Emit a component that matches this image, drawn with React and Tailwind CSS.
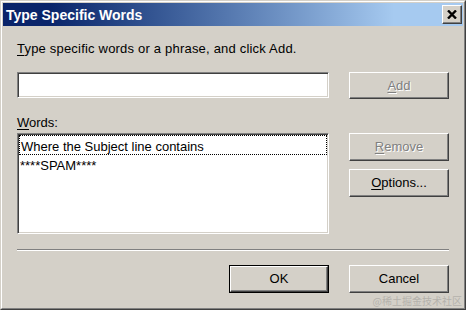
import React from "react";

// classic 3D edges
const raised =
  "border border-t-white border-l-white border-r-[#404040] border-b-[#404040] shadow-[inset_-1px_-1px_0_#808080,inset_1px_1px_0_#d4d0c8]";
const sunken =
  "border border-t-[#808080] border-l-[#808080] border-r-white border-b-white shadow-[inset_1px_1px_0_#404040,inset_-1px_-1px_0_#d4d0c8]";

const Mn = ({ children }) => <span className="underline underline-offset-[2px]">{children}</span>;

const Btn = ({ children, disabled, className = "" }) => (
  <button
    className={`${raised} ${className} flex items-center justify-center bg-[#d4d0c8] ${
      disabled ? "text-[#808080] [text-shadow:1px_1px_0_#ffffff]" : "text-black"
    }`}
  >
    {children}
  </button>
);

const TypeSpecificWords = () => {
  return (
    <div className="relative w-[466px] h-[310px] overflow-hidden bg-[#d4d0c8] font-['Liberation_Sans',Arial,sans-serif] text-[13px] leading-[16px] text-black border border-t-[#d4d0c8] border-l-[#d4d0c8] border-r-[#404040] border-b-[#404040]">
      <div className="h-full border border-t-white border-l-white border-r-[#808080] border-b-[#808080] p-[1px] flex flex-col">
        {/* Title bar */}
        <div className="h-[23px] flex items-center justify-between pl-[3px] pr-[1px] bg-linear-to-r from-[#0a246a] from-10% to-[#a6caf0] to-85%">
          <span className="text-white font-bold text-[14px] leading-[16px]">Type Specific Words</span>
          <div className={`${raised} w-[20px] h-[19px] bg-[#d4d0c8] flex items-center justify-center`}>
            <svg width="10" height="9" viewBox="0 0 10 9">
              <path d="M1 0.5L9 8.5M9 0.5L1 8.5" stroke="#000" strokeWidth="2.4" />
            </svg>
          </div>
        </div>

        {/* Body */}
        <div className="flex-1 pl-[14px] pr-[14px] flex flex-col">
          <div className="mt-[15px] tracking-[0.2px]">
            <Mn>T</Mn>ype specific words or a phrase, and click Add.
          </div>

          <div className="mt-[15px] flex gap-[20px]">
            <div className={`${sunken} w-[312px] h-[26px] bg-white`} />
            <Btn disabled className="w-[100px] h-[27px]">
              <Mn>A</Mn>dd
            </Btn>
          </div>

          <div className="mt-[16px]">
            <Mn>W</Mn>ords:
          </div>

          <div className="mt-[2px] flex gap-[20px]">
            <div className={`${sunken} w-[312px] h-[101px] bg-white p-[1px]`}>
              <div className="h-[20px] pt-[4px] pl-[1px] border border-dotted border-black leading-[14px]">
                Where the Subject line contains
              </div>
              <div className="h-[20px] pt-[4px] pl-[1px] leading-[14px]">****SPAM****</div>
            </div>
            <div className="flex flex-col gap-[8px]">
              <Btn disabled className="w-[100px] h-[28px]">
                <Mn>R</Mn>emove
              </Btn>
              <Btn className="w-[100px] h-[28px]">
                <Mn>O</Mn>ptions...
              </Btn>
            </div>
          </div>

          <div className="mt-[15px] h-[2px] border-t border-t-[#808080] border-b border-b-white" />

          <div className="mt-[14px] flex justify-end gap-[20px]">
            <div className="w-[100px] h-[28px] border border-black flex">
              <Btn className="flex-1">OK</Btn>
            </div>
            <Btn className="w-[100px] h-[28px]">Cancel</Btn>
          </div>
        </div>
      </div>

      {/* watermark */}
      <div className="absolute right-[3px] bottom-[3px] text-[10px] leading-[11px] text-[#b4b2ac] font-['Noto_Sans_CJK_SC',sans-serif]">
        @稀土掘金技术社区
      </div>
    </div>
  );
};

export default function App() {
  return <TypeSpecificWords />;
}
